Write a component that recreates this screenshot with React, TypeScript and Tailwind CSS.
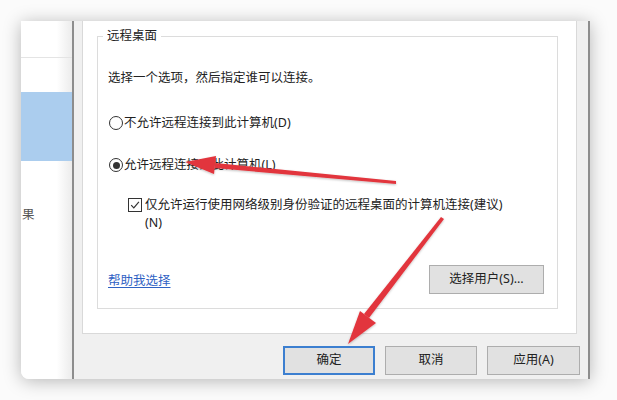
const font = { fontFamily: '"Noto Sans", "Noto Sans CJK SC", sans-serif' };

const Radio = ({ checked, label }: { checked?: boolean; label: string }) => (
  <div className="flex items-center h-[18px] leading-[18px]">
    <span className="ml-[1px] w-[14px] h-[14px] rounded-full border border-[#333] bg-white flex items-center justify-center">
      {checked && <span className="w-[7px] h-[7px] rounded-full bg-[#333]" />}
    </span>
    <span className="ml-[1px]">{label}</span>
  </div>
);

const WinButton = ({ label, primary, className = "" }: { label: string; primary?: boolean; className?: string }) => (
  <div
    className={`h-[29px] flex items-center justify-center bg-[#e1e1e1] text-[#222] ${
      primary ? "border-2 border-[#3c7fd0]" : "border border-[#adadad]"
    } ${className}`}
  >
    {label}
  </div>
);

const Arrows = () => (
  <svg className="absolute inset-0 pointer-events-none" width={617} height={400} viewBox="0 0 617 400">
    <defs>
      <filter id="sh" x="-20%" y="-20%" width="140%" height="140%">
        <feDropShadow dx="0" dy="1" stdDeviation="1" floodColor="#000" floodOpacity="0.25" />
      </filter>
    </defs>
    <g fill="#e2353c" filter="url(#sh)">
      <polygon points="396,181 215.5,163 214.5,168 396,184" />
      <polygon points="185,162 216,156 214,174" />
      <polygon points="444,219 441,217 364,314 369,318" />
      <polygon points="348,344 360,311 376,323" />
    </g>
  </svg>
);

export default function App() {
  return (
    <div className="relative w-[617px] h-[400px] overflow-hidden bg-[#fbfbfb] pt-[21px] pl-[21px] text-[12.5px] text-[#222]" style={font}>
      <div className="flex w-[569px] h-[358px] shadow-[0_2px_18px_rgba(0,0,0,0.28)] rounded-bl-[8px]">
        {/* settings window behind */}
        <div className="w-[51px] h-full flex flex-col bg-linear-to-r from-white from-70% to-[#ececec] rounded-bl-[8px] text-[#555]">
          <div className="h-[37px] border-b border-[#e4e4e4]" />
          <div className="h-[34px]" />
          <div className="h-[69px] bg-[#abcdee]" />
          <div className="mt-[45px] pl-[1px] leading-[18px]">果</div>
        </div>

        {/* properties dialog */}
        <div className="w-[518px] h-full flex flex-col bg-[#f0f0f0] border-x-2 border-[#8d8d8d]">
          <div className="ml-[8px] w-[495px] h-[313px] bg-white border-x border-b border-[#d9d9d9] flex flex-col">
            <fieldset className="mt-[7px] ml-[14px] w-[461px] border border-[#dcdcdc] p-0">
              <legend className="ml-[5px] px-[4px] leading-[16px]">远程桌面</legend>
              <div className="pl-[10px] pr-[13px] pb-[14px] flex flex-col">
                <div className="mt-[25px] leading-[18px]">选择一个选项，然后指定谁可以连接。</div>
                <div className="mt-[27px]">
                  <Radio label="不允许远程连接到此计算机(D)" />
                </div>
                <div className="mt-[24px]">
                  <Radio checked label="允许远程连接到此计算机(L)" />
                </div>
                <div className="mt-[22px] ml-[20px] flex items-start leading-[18px]">
                  <span className="mt-[2px] w-[14px] h-[14px] border border-[#333] bg-white flex items-center justify-center shrink-0">
                    <svg width="10" height="10" viewBox="0 0 10 10">
                      <path d="M1.2 5.2 L3.8 7.8 L8.9 1.8" fill="none" stroke="#333" strokeWidth="1.2" />
                    </svg>
                  </span>
                  <span className="ml-[3px]">
                    仅允许运行使用网络级别身份验证的远程桌面的计算机连接(建议)
                    <br />
                    (N)
                  </span>
                </div>
                <div className="mt-[33px] flex items-center justify-between">
                  <span className="mt-[3px] text-[#2f62c4] underline underline-offset-2">帮助我选择</span>
                  <WinButton label="选择用户(S)..." className="w-[115px]" />
                </div>
              </div>
            </fieldset>
          </div>
          <div className="mt-[12px] pr-[8px] flex justify-end gap-[10px]">
            <WinButton primary label="确定" className="w-[92px]" />
            <WinButton label="取消" className="w-[92px]" />
            <WinButton label="应用(A)" className="w-[93px]" />
          </div>
        </div>
      </div>
      <Arrows />
    </div>
  );
}
